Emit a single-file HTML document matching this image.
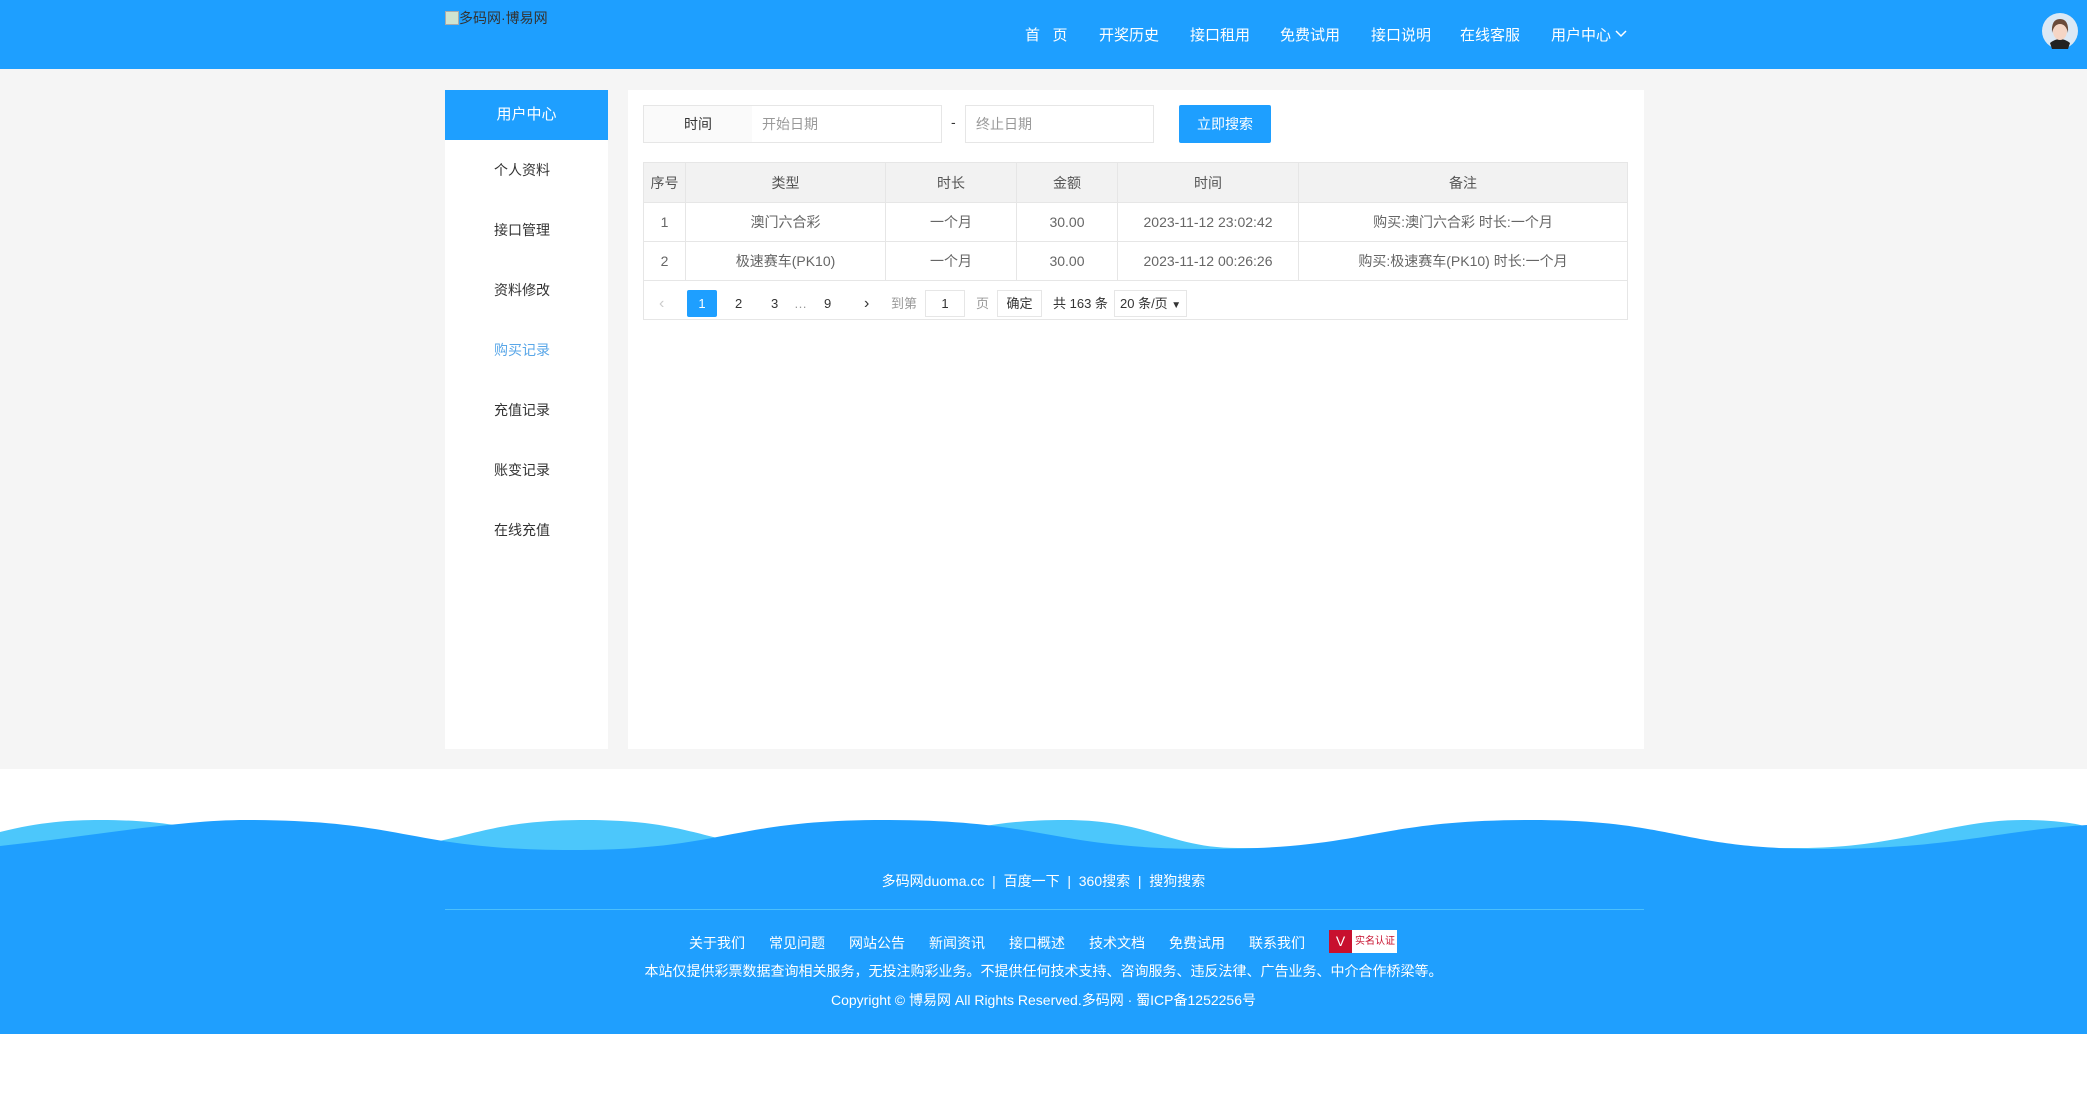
<!DOCTYPE html>
<html><head><meta charset="utf-8">
<style>
*{margin:0;padding:0;box-sizing:border-box}
body{width:2087px;height:1120px;background:#fff;font-family:"Liberation Sans","Noto Sans CJK SC",sans-serif;position:relative;overflow:hidden;color:#333}
.abs{position:absolute}
#hdr{left:0;top:0;width:2087px;height:69px;background:#1e9fff}
.nav{top:24px;font-size:15px;color:#fff;white-space:nowrap}
#grey{left:0;top:69px;width:2087px;height:700px;background:#f5f5f5}
#side{left:445px;top:90px;width:163px;height:659px;background:#fff}
#sidehd{left:445px;top:90px;width:163px;height:50px;background:#1e9fff;color:#fff;font-size:15px;text-align:center;line-height:50px}
.si{left:494px;font-size:14px;color:#333}
#main{left:628px;top:90px;width:1016px;height:659px;background:#fff}
.box{border:1px solid #e6e6e6;background:#fff;font-size:14px;line-height:36px}
table{border-collapse:collapse;font-size:14px;color:#666}
td,th{border:1px solid #e6e6e6;text-align:center;font-weight:normal}
th{background:#f2f2f2;color:#555;height:40px}
td{height:39px}
.pg{font-size:13px;color:#333;top:290px;line-height:27px}
.ft{color:#fff;font-size:14px;white-space:nowrap}
.fl{top:933px}
</style></head><body>
<div id="hdr" class="abs"></div>
<div class="abs" style="left:445px;top:8px;font-size:14px;color:#333;white-space:nowrap"><span style="display:inline-block;width:14px;height:14px;background:#cfe3d0;border:1px solid #aaa;vertical-align:-2px"></span>多码网·博易网</div>
<div class="abs nav" style="left:1025px">首&nbsp;&nbsp;&nbsp;页</div>
<div class="abs nav" style="left:1099px">开奖历史</div>
<div class="abs nav" style="left:1190px">接口租用</div>
<div class="abs nav" style="left:1280px">免费试用</div>
<div class="abs nav" style="left:1371px">接口说明</div>
<div class="abs nav" style="left:1460px">在线客服</div>
<div class="abs nav" style="left:1551px">用户中心 <svg width="12" height="10" viewBox="0 0 12 10" style="vertical-align:1px"><path d="M1 2 L6 7 L11 2" stroke="#fff" stroke-width="1.5" fill="none"/></svg></div>
<svg class="abs" style="left:2042px;top:13px" width="36" height="36" viewBox="0 0 36 36"><circle cx="18" cy="18" r="18" fill="#dbe8f5"/><path d="M8 30 Q18 22 28 30 L26 36 L10 36Z" fill="#222"/><ellipse cx="18" cy="18" rx="7" ry="9" fill="#f5d5c5"/><path d="M10 20 Q9 6 18 6 Q27 6 26 20 Q24 11 18 11 Q12 11 10 20Z" fill="#6b4a3a"/></svg>

<div id="grey" class="abs"></div>
<div id="side" class="abs"></div>
<div id="sidehd" class="abs">用户中心</div>
<div class="abs si" style="top:160px">个人资料</div>
<div class="abs si" style="top:220px">接口管理</div>
<div class="abs si" style="top:280px">资料修改</div>
<div class="abs si" style="top:340px;color:#5aa7e8">购买记录</div>
<div class="abs si" style="top:400px">充值记录</div>
<div class="abs si" style="top:460px">账变记录</div>
<div class="abs si" style="top:520px">在线充值</div>

<div id="main" class="abs"></div>
<div class="abs box" style="left:643px;top:105px;width:110px;height:38px;background:#fafafa;text-align:center">时间</div>
<div class="abs box" style="left:752px;top:105px;width:190px;height:38px;padding-left:10px;color:#999;border-left:none">开始日期</div>
<div class="abs" style="left:951px;top:114px;font-size:14px">-</div>
<div class="abs box" style="left:965px;top:105px;width:189px;height:38px;padding-left:10px;color:#999">终止日期</div>
<div class="abs" style="left:1179px;top:105px;width:92px;height:38px;background:#1e9fff;color:#fff;font-size:14px;text-align:center;line-height:38px;border-radius:2px">立即搜索</div>

<table class="abs" style="left:643px;top:162px;width:985px">
<tr><th style="width:42px">序号</th><th style="width:200px">类型</th><th style="width:131px">时长</th><th style="width:101px">金额</th><th style="width:181px">时间</th><th>备注</th></tr>
<tr><td>1</td><td>澳门六合彩</td><td>一个月</td><td>30.00</td><td>2023-11-12 23:02:42</td><td>购买:澳门六合彩 时长:一个月</td></tr>
<tr><td>2</td><td>极速赛车(PK10)</td><td>一个月</td><td>30.00</td><td>2023-11-12 00:26:26</td><td>购买:极速赛车(PK10) 时长:一个月</td></tr>
</table>
<div class="abs" style="left:643px;top:280px;width:985px;height:40px;border:1px solid #e6e6e6;border-top:none"></div>
<div class="abs pg" style="left:659px;color:#ccc;font-size:16px">&#8249;</div>
<div class="abs pg" style="left:687px;width:30px;height:27px;background:#1e9fff;color:#fff;text-align:center;border-radius:2px">1</div>
<div class="abs pg" style="left:735px">2</div>
<div class="abs pg" style="left:771px">3</div>
<div class="abs pg" style="left:794px;color:#999">…</div>
<div class="abs pg" style="left:824px">9</div>
<div class="abs pg" style="left:864px;font-size:16px">&#8250;</div>
<div class="abs pg" style="left:891px;color:#999">到第</div>
<div class="abs pg" style="left:925px;width:40px;height:27px;border:1px solid #e6e6e6;text-align:center;line-height:25px">1</div>
<div class="abs pg" style="left:976px;color:#999">页</div>
<div class="abs pg" style="left:997px;width:45px;height:27px;border:1px solid #e6e6e6;text-align:center;line-height:25px">确定</div>
<div class="abs pg" style="left:1053px">共 163 条</div>
<div class="abs pg" style="left:1114px;width:73px;height:27px;border:1px solid #e6e6e6;line-height:25px;padding-left:5px">20 条/页 <b style="font-size:10px">&#9660;</b></div>

<svg class="abs" style="left:0;top:800px" width="2087" height="234" viewBox="0 800 2087 234">
<path d="M0,832 C40,822 70,820 100,820 C221,820 221,850 343,850 C465,850 465,820 586,820 C705,820 705,850 825,850 C945,850 945,820 1065,820 C1150,820 1170,848 1238,848 C1400,848 1600,849 1800,848 C1900,848 1950,820 2023,820 C2060,820 2087,825 2087,828 L2087,860 L0,860Z" fill="#4cc7fb"/>
<path d="M0,846 C100,835 180,820 246,820 C409,820 409,850 572,850 C728,850 728,820 885,820 C1048,820 1048,849 1211,849 C1371,849 1371,820 1531,820 C1677,820 1677,849 1823,849 C1950,849 2000,830 2087,825 L2087,1034 L0,1034Z" fill="#1f9ffe"/>
</svg>
<div class="abs ft" style="left:0;width:2087px;text-align:center;top:871px">多码网duoma.cc&nbsp;&nbsp;|&nbsp;&nbsp;百度一下&nbsp;&nbsp;|&nbsp;&nbsp;360搜索&nbsp;&nbsp;|&nbsp;&nbsp;搜狗搜索</div>
<div class="abs" style="left:445px;top:909px;width:1199px;height:1px;background:#4cc0fb"></div>
<div class="abs ft fl" style="left:689px">关于我们</div>
<div class="abs ft fl" style="left:769px">常见问题</div>
<div class="abs ft fl" style="left:849px">网站公告</div>
<div class="abs ft fl" style="left:929px">新闻资讯</div>
<div class="abs ft fl" style="left:1009px">接口概述</div>
<div class="abs ft fl" style="left:1089px">技术文档</div>
<div class="abs ft fl" style="left:1169px">免费试用</div>
<div class="abs ft fl" style="left:1249px">联系我们</div>
<div class="abs" style="left:1329px;top:930px;width:68px;height:23px;background:#fff"><div style="width:23px;height:23px;background:#c8102e;color:#fff;font-size:14px;text-align:center;line-height:23px">V</div><div class="abs" style="left:26px;top:2px;font-size:10px;color:#c8102e;white-space:nowrap">实名认证</div></div>
<div class="abs ft" style="left:0;width:2087px;text-align:center;top:961px">本站仅提供彩票数据查询相关服务，无投注购彩业务。不提供任何技术支持、咨询服务、违反法律、广告业务、中介合作桥梁等。</div>
<div class="abs ft" style="left:0;width:2087px;text-align:center;top:990px">Copyright © 博易网 All Rights Reserved.多码网 · 蜀ICP备1252256号</div>
</body></html>
